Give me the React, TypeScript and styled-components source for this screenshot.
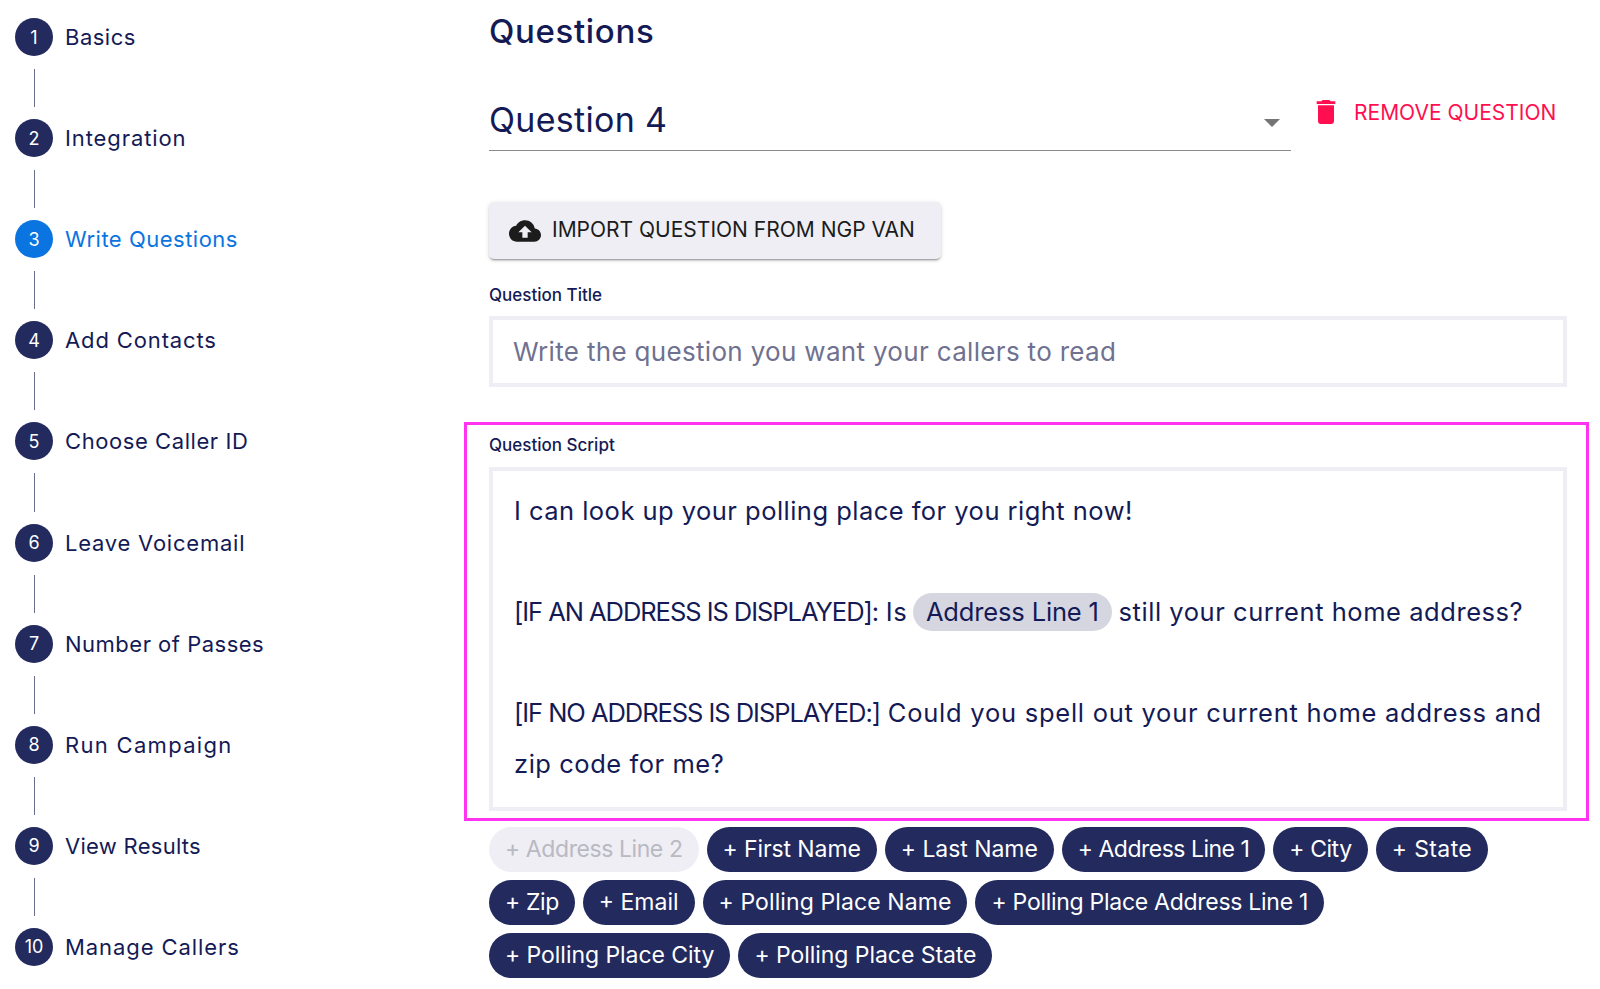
import React from 'react'
import styled, { createGlobalStyle } from 'styled-components'

const navy = '#222a5e'
const ink = '#141a55'
const blue = '#0a74e0'
const pale = '#eeeef4'
const red = '#ff0f50'

const steps = [
  { label: 'Basics', tracking: 0.5 },
  { label: 'Integration', tracking: 0.9 },
  { label: 'Write Questions', tracking: 0.5 },
  { label: 'Add Contacts', tracking: 0.87 },
  { label: 'Choose Caller ID', tracking: 0.57 },
  { label: 'Leave Voicemail', tracking: 0.77 },
  { label: 'Number of Passes', tracking: 0.5 },
  { label: 'Run Campaign', tracking: 1.3 },
  { label: 'View Results', tracking: 0.28 },
  { label: 'Manage Callers', tracking: 0.92 },
]

const chipRows = [
  [
    { label: 'Address Line 2', tracking: -0.42, disabled: true },
    { label: 'First Name', tracking: -0.1 },
    { label: 'Last Name', tracking: -0.05 },
    { label: 'Address Line 1', tracking: -0.5 },
    { label: 'City', tracking: -0.45 },
    { label: 'State', tracking: 0.4 },
  ],
  [
    { label: 'Zip', tracking: -0.4 },
    { label: 'Email', tracking: 0 },
    { label: 'Polling Place Name', tracking: 0.1 },
    { label: 'Polling Place Address Line 1', tracking: -0.28 },
  ],
  [
    { label: 'Polling Place City', tracking: -0.05 },
    { label: 'Polling Place State', tracking: -0.05 },
  ],
]

export default function App() {
  return (
    <>
      <GlobalStyle />
      <Page>
        <Stepper>
          {steps.map((step, i) => (
            <StepGroup key={step.label}>
              <Step>
                <StepNumber $active={i === 2}>{i + 1}</StepNumber>
                <StepLabel $active={i === 2} $tracking={step.tracking}>
                  {step.label}
                </StepLabel>
              </Step>
              {i < steps.length - 1 && <Connector />}
            </StepGroup>
          ))}
        </Stepper>
        <Main>
          <Heading>Questions</Heading>
          <SelectRow>
            <Select>
              <SelectValue>Question 4</SelectValue>
              <Caret />
            </Select>
            <RemoveButton>
              <svg width="32" height="32" viewBox="0 0 24 24" fill={red}>
                <path d="M6 19c0 1.1.9 2 2 2h8c1.1 0 2-.9 2-2V7H6v12zM19 4h-3.5l-1-1h-5l-1 1H5v2h14V4z" />
              </svg>
              REMOVE QUESTION
            </RemoveButton>
          </SelectRow>
          <ImportButton>
            <svg width="32" height="32" viewBox="0 0 24 24" fill="#1c1c1c">
              <path d="M19.35 10.04C18.67 6.59 15.64 4 12 4 9.11 4 6.6 5.64 5.35 8.04 2.34 8.36 0 10.91 0 14c0 3.31 2.69 6 6 6h13c2.76 0 5-2.24 5-5 0-2.64-2.05-4.78-4.65-4.96zM14 13v4h-4v-4H7l5-5 5 5h-3z" />
            </svg>
            <ImportText>IMPORT QUESTION FROM NGP VAN</ImportText>
          </ImportButton>
          <FieldLabel>Question Title</FieldLabel>
          <TitleInput>Write the question you want your callers to read</TitleInput>
          <ScriptFrame>
            <FieldLabel>Question Script</FieldLabel>
            <ScriptBox>
              <ScriptLine $tracking={0.47}>I can look up your polling place for you right now!</ScriptLine>
              <ScriptLine>&nbsp;</ScriptLine>
              <ScriptLine>
                <Caps>[IF AN ADDRESS IS DISPLAYED]:</Caps> Is <Token>Address Line 1</Token> still your current home address?
              </ScriptLine>
              <ScriptLine>&nbsp;</ScriptLine>
              <ScriptLine $tracking={0.75}>
                <Caps>[IF NO ADDRESS IS DISPLAYED:]</Caps> Could you spell out your current home address and
              </ScriptLine>
              <ScriptLine>zip code for me?</ScriptLine>
            </ScriptBox>
          </ScriptFrame>
          <ChipList>
            {chipRows.map((row) => (
              <ChipRow key={row[0].label}>
                {row.map((chip) => (
                  <Chip key={chip.label} $disabled={chip.disabled} $tracking={chip.tracking}>
                    + {chip.label}
                  </Chip>
                ))}
              </ChipRow>
            ))}
          </ChipList>
        </Main>
      </Page>
    </>
  )
}

const GlobalStyle = createGlobalStyle`
  html, body {
    margin: 0;
    background: #fff;
    overflow: hidden;
  }
  body {
    font-family: 'Inter', 'Open Sans', sans-serif;
    color: ${ink};
  }
`

const Page = styled.div`
  display: flex;
  width: 1600px;
  height: 989px;
`

const Stepper = styled.div`
  width: 489px;
  flex-shrink: 0;
  padding: 18px 0 0 15px;
  box-sizing: border-box;
`

const StepGroup = styled.div`
  display: flex;
  flex-direction: column;
`

const Step = styled.div`
  display: flex;
  align-items: center;
  height: 38px;
`

const StepNumber = styled.div<{ $active?: boolean }>`
  width: 38px;
  height: 38px;
  border-radius: 50%;
  background: ${(p) => (p.$active ? blue : navy)};
  color: #fff;
  font-size: 18px;
  display: flex;
  align-items: center;
  justify-content: center;
  flex-shrink: 0;
`

const StepLabel = styled.div<{ $active?: boolean; $tracking: number }>`
  margin-left: 12px;
  font-size: 22px;
  letter-spacing: ${(p) => p.$tracking}px;
  color: ${(p) => (p.$active ? blue : ink)};
`

const Connector = styled.div`
  width: 1px;
  height: 38.12px;
  margin: 13px 0 12px 19px;
  background: #6b6f8c;
`

const Main = styled.div`
  width: 1078px;
  display: flex;
  flex-direction: column;
`

const Heading = styled.h1`
  margin: 10px 0 0;
  font-size: 33px;
  line-height: 42px;
  font-weight: 500;
  letter-spacing: 0.65px;
  color: ${ink};
`

const SelectRow = styled.div`
  display: flex;
  margin-top: 39px;
`

const Select = styled.div`
  width: 802px;
  height: 59px;
  border-bottom: 1px solid #8a8a8a;
  display: flex;
  align-items: center;
  justify-content: space-between;
`

const SelectValue = styled.div`
  margin-bottom: 2px;
  font-size: 34px;
  letter-spacing: 0.3px;
`

const Caret = styled.div`
  width: 0;
  height: 0;
  margin: 5px 11px 0 0;
  border-left: 8px solid transparent;
  border-right: 8px solid transparent;
  border-top: 8px solid #757575;
`

const RemoveButton = styled.div`
  display: flex;
  align-items: center;
  gap: 12px;
  height: 32px;
  margin: 5px 0 0 19px;
  font-size: 21px;
  color: ${red};
  white-space: nowrap;
`

const ImportButton = styled.div`
  display: flex;
  align-items: center;
  gap: 11px;
  width: 452px;
  height: 57px;
  margin-top: 51px;
  padding-left: 20px;
  box-sizing: border-box;
  background: ${pale};
  border-radius: 5px;
  color: #1c1c1c;
  font-size: 21px;
  box-shadow: 0 3px 1px -2px rgba(0, 0, 0, 0.2), 0 2px 2px rgba(0, 0, 0, 0.14), 0 1px 5px rgba(0, 0, 0, 0.12);
`

const ImportText = styled.span`
  margin-bottom: 2px;
`

const FieldLabel = styled.div`
  margin-top: 25px;
  font-size: 17px;
  line-height: 22px;
  font-weight: 500;
  color: ${ink};
`

const TitleInput = styled.div`
  width: 1078px;
  height: 71px;
  margin-top: 10px;
  padding-left: 20px;
  box-sizing: border-box;
  border: 4px solid ${pale};
  display: flex;
  align-items: center;
  font-size: 26px;
  letter-spacing: 0.32px;
  color: #6f7190;
`

const ScriptFrame = styled.div`
  width: 1125px;
  height: 399px;
  margin: 35px 0 0 -25px;
  padding: 0 19px 0 22px;
  box-sizing: border-box;
  border: 3px solid #ff33f0;

  ${FieldLabel} {
    margin-top: 9px;
  }
`

const ScriptBox = styled.div`
  height: 344px;
  margin-top: 11px;
  padding: 15px 0 0 21px;
  box-sizing: border-box;
  border: 4px solid ${pale};
`

const ScriptLine = styled.div<{ $tracking?: number }>`
  font-size: 25.5px;
  line-height: 50.6px;
  letter-spacing: ${(p) => p.$tracking ?? 0.55}px;
  white-space: nowrap;
`

const Caps = styled.span`
  letter-spacing: -1.05px;
`

const Token = styled.span`
  display: inline-block;
  height: 38px;
  line-height: 38px;
  margin: 0 -1px 0 -2px;
  padding: 0 13px;
  border-radius: 19px;
  letter-spacing: -0.15px;
  background: #d6d6e1;
`

const ChipList = styled.div`
  display: flex;
  flex-direction: column;
  gap: 8px;
  margin-top: 6px;
`

const ChipRow = styled.div`
  display: flex;
  gap: 8px;
`

const Chip = styled.div<{ $disabled?: boolean; $tracking: number }>`
  height: 45px;
  padding: 0 16px 2px;
  box-sizing: border-box;
  border-radius: 23px;
  display: flex;
  align-items: center;
  font-size: 23px;
  letter-spacing: ${(p) => p.$tracking}px;
  white-space: nowrap;
  background: ${(p) => (p.$disabled ? pale : navy)};
  color: ${(p) => (p.$disabled ? '#b9b9c2' : '#fff')};
`
